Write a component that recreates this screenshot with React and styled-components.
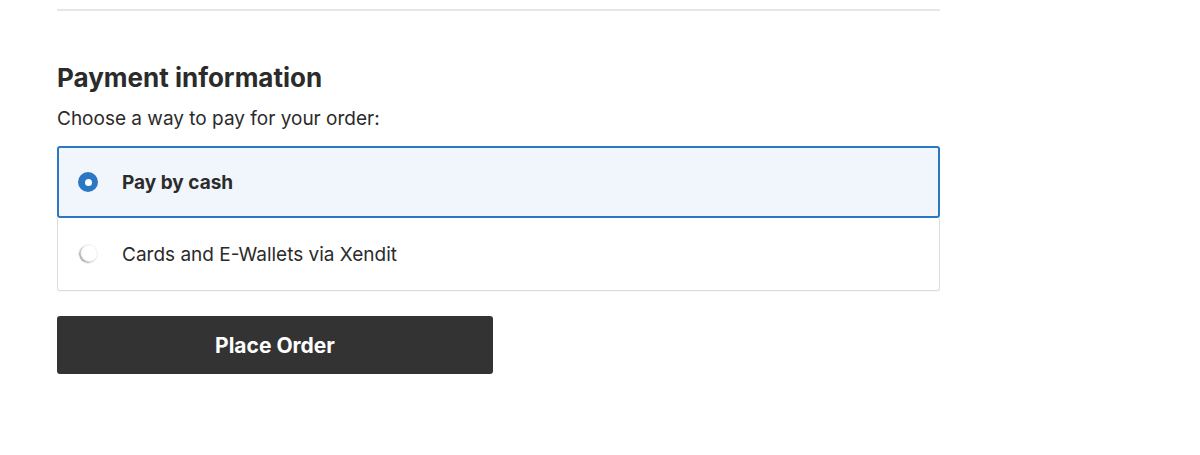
import React, { useState } from "react";
import styled, { createGlobalStyle } from "styled-components";

const GlobalStyle = createGlobalStyle`
  body {
    margin: 0;
    background: #ffffff;
    font-family: Inter, "Noto Sans", sans-serif;
    color: #2b2b2b;
  }
`;

const Page = styled.div`
  width: 883px;
  margin-left: 57px;
  padding-top: 9px;
`;

const Divider = styled.hr`
  margin: 0;
  border: none;
  border-top: 2px solid #e6e6e6;
`;

const Title = styled.h2`
  margin: 51px 0 0;
  font-size: 26px;
  line-height: 32px;
  font-weight: 700;
  color: #2b2b2b;
`;

const Lead = styled.p`
  margin: 12px 0 14px;
  font-size: 19px;
  line-height: 26px;
  color: #2b2b2b;
`;

const Options = styled.div`
  display: flex;
  flex-direction: column;
`;

const Option = styled.label`
  display: flex;
  align-items: center;
  gap: 24px;
  height: ${({ $active }) => ($active ? "72px" : "73px")};
  box-sizing: border-box;
  padding-left: ${({ $active }) => ($active ? "19px" : "20px")};
  cursor: pointer;
  background: ${({ $active }) => ($active ? "#f0f6fc" : "#ffffff")};
  border: ${({ $active }) =>
    $active ? "2px solid #2a78c4" : "1px solid #dcdcde"};
  border-top: ${({ $active }) => ($active ? "2px solid #2a78c4" : "none")};
  border-radius: ${({ $active }) => ($active ? "3px" : "0 0 3px 3px")};
  box-shadow: ${({ $active }) => ($active ? "none" : "0 1px 1px rgba(0,0,0,0.03)")};
`;

const Radio = styled.span`
  flex: none;
  width: 20px;
  height: 20px;
  border-radius: 50%;
  box-sizing: border-box;
  display: flex;
  align-items: center;
  justify-content: center;
  background: ${({ $checked }) => ($checked ? "#2a78c4" : "#ffffff")};
  box-shadow: ${({ $checked }) =>
    $checked ? "none" : "inset 1.5px -1px 1.5px rgba(0,0,0,0.35)"};
  border: ${({ $checked }) => ($checked ? "none" : "1px solid #f0f0f0")};

  &::after {
    content: "";
    display: ${({ $checked }) => ($checked ? "block" : "none")};
    width: 7px;
    height: 7px;
    border-radius: 50%;
    background: #ffffff;
  }
`;

const OptionText = styled.span`
  font-size: 19px;
  font-weight: ${({ $active }) => ($active ? 700 : 400)};
  color: #2b2b2b;
`;

const PlaceButton = styled.button`
  margin-top: 25px;
  width: 436px;
  height: 58px;
  border: none;
  border-radius: 3px;
  background: #333333;
  color: #ffffff;
  font-family: Inter, "Noto Sans", sans-serif;
  font-size: 21px;
  font-weight: 700;
  cursor: pointer;
`;

const methods = [
  { id: "cod", label: "Pay by cash" },
  { id: "xendit", label: "Cards and E-Wallets via Xendit" },
];

export default function App() {
  const [selected, setSelected] = useState("cod");

  return (
    <>
      <GlobalStyle />
      <Page>
        <Divider />
        <Title>Payment information</Title>
        <Lead>Choose a way to pay for your order:</Lead>
        <Options>
          {methods.map((m) => (
            <Option
              key={m.id}
              $active={selected === m.id}
              onClick={() => setSelected(m.id)}
            >
              <Radio $checked={selected === m.id} />
              <OptionText $active={selected === m.id}>{m.label}</OptionText>
            </Option>
          ))}
        </Options>
        <PlaceButton>Place Order</PlaceButton>
      </Page>
    </>
  );
}
